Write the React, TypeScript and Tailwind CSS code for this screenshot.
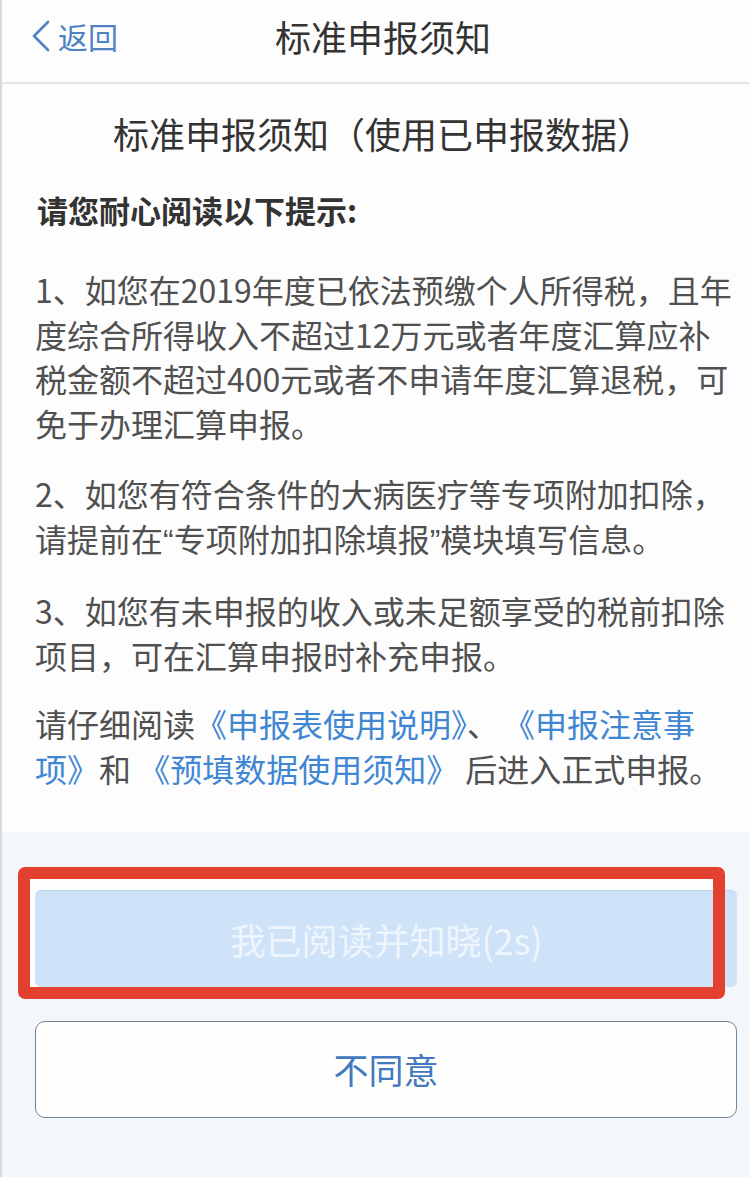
import React from 'react';

const font = { fontFamily: '"Noto Sans CJK SC", "Noto Sans", sans-serif' };

const Link: React.FC<{ children: React.ReactNode; className?: string }> = ({ children, className }) => (
  <span className={`text-[#3f86d3] ${className ?? ''}`}>{children}</span>
);

// narrow western quotes, as in the screenshot
const Q: React.FC<{ children: React.ReactNode }> = ({ children }) => (
  <span style={{ fontFamily: '"Liberation Sans", sans-serif' }}>{children}</span>
);

export default function App() {
  return (
    <div
      className="w-[750px] h-[1177px] flex flex-col bg-[#f3f6fa] border-l-2 border-[#dadada] overflow-hidden"
      style={font}
    >
      {/* Header */}
      <header className="h-[84px] shrink-0 bg-[#fdfdfd] border-b-2 border-[#e6e6e6] grid grid-cols-[1fr_auto_1fr] items-start pt-[14px]">
        <div className="flex items-center pl-[29px] h-[44px] gap-[7px] text-[#4f82c2]">
          <svg width="20" height="32" viewBox="0 0 20 32" fill="none">
            <polyline points="17,2 3,16 17,30" stroke="#4f82c2" strokeWidth="2.6" strokeLinecap="round" strokeLinejoin="round" />
          </svg>
          <span className="text-[30px] leading-[44px]">返回</span>
        </div>
        <h1 className="ml-[14px] text-[36px] leading-[44px] text-[#333333] font-normal">标准申报须知</h1>
        <div />
      </header>

      {/* Body */}
      <main className="bg-[#fdfdfd] pt-[25px] pb-[42px] pl-[33px] pr-[10px]">
        <h2 className="text-[36px] leading-[48px] text-[#333333] text-center pr-[9px] font-normal">
          标准申报须知（使用已申报数据）
        </h2>

        <p className="mt-[31px] text-[31px] leading-[44px] font-bold text-[#333333] pl-[2px]">
          请您耐心阅读以下提示:
        </p>

        <div className="text-[32px] leading-[44.5px] text-[#505050] whitespace-nowrap">
          <p className="mt-[35px]">
            1、如您在2019年度已依法预缴个人所得税，且年
            <br />
            度综合所得收入不超过12万元或者年度汇算应补
            <br />
            税金额不超过400元或者不申请年度汇算退税，可
            <br />
            免于办理汇算申报。
          </p>
          <p className="mt-[26px]">
            2、如您有符合条件的大病医疗等专项附加扣除，
            <br />
            请提前在<Q>“</Q>专项附加扣除填报<Q>”</Q>模块填写信息。
          </p>
          <p className="mt-[25px]">
            3、如您有未申报的收入或未足额享受的税前扣除
            <br />
            项目，可在汇算申报时补充申报。
          </p>
          <p className="mt-[24px]">
            请仔细阅读<Link>《申报表使用说明》</Link>、<Link className="ml-[20px]">《申报注意事</Link>
            <br />
            <Link>项》</Link>和 <Link>《预填数据使用须知》</Link> 后进入正式申报。
          </p>
        </div>
      </main>

      {/* Actions */}
      <section className="flex-1 pt-[58px] pl-[33px] pr-[13px] flex flex-col gap-[34px]">
        <div className="relative">
          <div className="absolute -left-[17px] -top-[23px] w-[707px] h-[132px] rounded-[6px] bg-[#fdfdfd]" />
          <button className="relative z-10 w-full h-[97px] rounded-[6px] bg-[#cfe3f8] border-t border-[#bcd4ec] text-[36px] text-[#eef5fc]">
            我已阅读并知晓(2s)
          </button>
          <div className="absolute z-20 -left-[17px] -top-[23px] w-[707px] h-[132px] rounded-[7px] border-[12px] border-[#e2412f] pointer-events-none" />
        </div>
        <button className="w-full h-[97px] rounded-[10px] bg-[#fefefd] border-[1.5px] border-[#6f8598] text-[35px] text-[#4279bf]">
          不同意
        </button>
      </section>
    </div>
  );
}
